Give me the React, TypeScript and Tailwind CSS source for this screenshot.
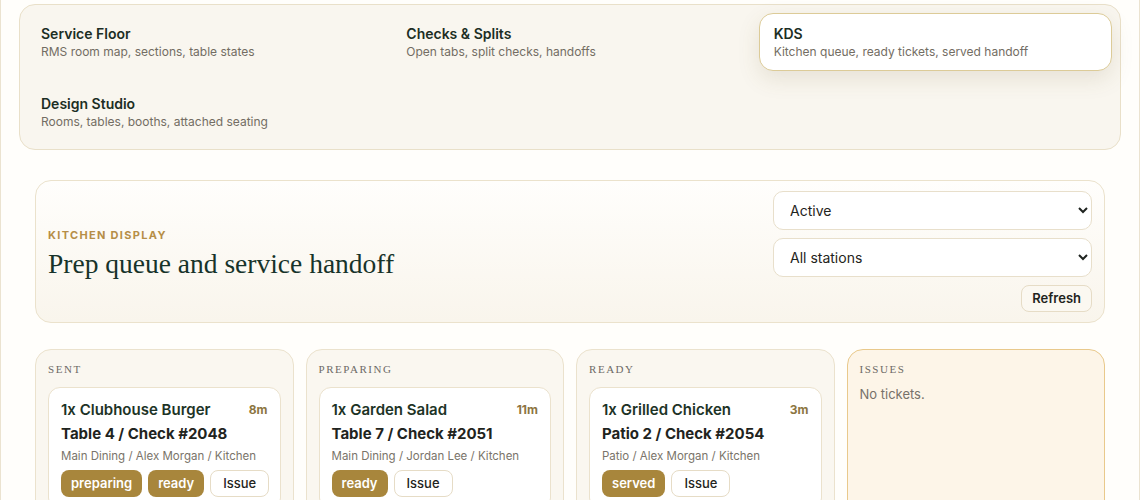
import { useState } from "react";

type Ticket = {
  item: string;
  age: string;
  where: string;
  meta: string;
  actions: string[];
};

const navItems = [
  { title: "Service Floor", desc: "RMS room map, sections, table states" },
  { title: "Checks & Splits", desc: "Open tabs, split checks, handoffs" },
  { title: "KDS", desc: "Kitchen queue, ready tickets, served handoff" },
  { title: "Design Studio", desc: "Rooms, tables, booths, attached seating" },
];

const lanes: { name: string; issue?: boolean; tickets: Ticket[] }[] = [
  {
    name: "Sent",
    tickets: [
      {
        item: "1x Clubhouse Burger",
        age: "8m",
        where: "Table 4 / Check #2048",
        meta: "Main Dining / Alex Morgan / Kitchen",
        actions: ["preparing", "ready"],
      },
    ],
  },
  {
    name: "Preparing",
    tickets: [
      {
        item: "1x Garden Salad",
        age: "11m",
        where: "Table 7 / Check #2051",
        meta: "Main Dining / Jordan Lee / Kitchen",
        actions: ["ready"],
      },
    ],
  },
  {
    name: "Ready",
    tickets: [
      {
        item: "1x Grilled Chicken",
        age: "3m",
        where: "Patio 2 / Check #2054",
        meta: "Patio / Alex Morgan / Kitchen",
        actions: ["served"],
      },
    ],
  },
  { name: "Issues", issue: true, tickets: [] },
];

function TicketCard({ t }: { t: Ticket }) {
  return (
    <div className="rounded-xl border border-[#ebe2cd] bg-white p-3">
      <div className="flex items-center justify-between">
        <span className="text-[15px] leading-5 font-semibold text-[#1d3326]">{t.item}</span>
        <span className="text-xs font-bold text-[#8c7541]">{t.age}</span>
      </div>
      <div className="mt-1 text-[15px] leading-5 font-bold text-[#1f2420]">{t.where}</div>
      <div className="mt-1 text-[11.5px] leading-4 text-[#7a746a]">{t.meta}</div>
      <div className="mt-1.5 flex gap-1.5">
        {t.actions.map((a) => (
          <button
            key={a}
            className="h-[27px] rounded-lg bg-[#a8863c] px-2.5 text-[13px] font-semibold text-white"
          >
            {a}
          </button>
        ))}
        <button className="h-[27px] rounded-lg border border-[#e6dcc6] bg-white px-3 text-[13px] font-medium text-[#1f2420]">
          Issue
        </button>
      </div>
    </div>
  );
}

export default function App() {
  const [status, setStatus] = useState("active");
  const [station, setStation] = useState("all");

  return (
    <div className="min-h-screen border-x border-[#ebe3d0] bg-[#fffefb] px-[18px] pt-1 font-['Inter',sans-serif]">
      {/* Module switcher */}
      <nav className="grid grid-cols-3 gap-3 rounded-2xl border border-[#e9e0c9] bg-[#f9f6ef] p-2">
        {navItems.map((n) => {
          const active = n.title === "KDS";
          return (
            <div
              key={n.title}
              className={
                active
                  ? "rounded-[14px] border border-[#dccb98] bg-white px-3.5 py-2.5 shadow-[0_8px_22px_rgba(110,95,50,0.13)]"
                  : "rounded-[14px] border border-transparent px-3 py-2.5"
              }
            >
              <div className="text-sm leading-5 font-semibold text-[#1c2e24]">{n.title}</div>
              <div className="text-xs leading-4 text-[#736d63]">{n.desc}</div>
            </div>
          );
        })}
      </nav>

      <main className="px-4">
        {/* Header */}
        <section className="mt-[30px] flex items-center justify-between rounded-2xl border border-[#ebe2cc] bg-gradient-to-b from-[#fffefc] to-[#f9f5ec] px-3 py-2.5">
          <div className="pt-1">
            <div className="text-[11px] font-bold tracking-[0.12em] text-[#b68e47] uppercase">
              Kitchen Display
            </div>
            <h1 className="mt-1 font-['Liberation_Serif',serif] text-[27.5px] leading-8 text-[#17332a]">
              Prep queue and service handoff
            </h1>
          </div>
          <div className="flex w-[319px] flex-col items-end gap-2">
            <select
              value={status}
              onChange={(e) => setStatus(e.target.value)}
              className="h-[39px] w-full rounded-[10px] border border-[#e8dfcb] bg-white pr-2 pl-3 text-sm text-[#1f2420]"
            >
              <option value="active">Active</option>
              <option value="all">All</option>
            </select>
            <select
              value={station}
              onChange={(e) => setStation(e.target.value)}
              className="h-[39px] w-full rounded-[10px] border border-[#e8dfcb] bg-white pr-2 pl-3 text-sm text-[#1f2420]"
            >
              <option value="all">All stations</option>
              <option value="kitchen">Kitchen</option>
            </select>
            <button className="h-[27px] rounded-lg border border-[#e6dcc6] bg-[#fbf8f1] px-2.5 text-[13px] font-semibold text-[#1f2420]">
              Refresh
            </button>
          </div>
        </section>

        {/* Lanes */}
        <section className="mt-[26px] grid grid-cols-4 gap-3">
          {lanes.map((l) => (
            <div
              key={l.name}
              className={
                l.issue
                  ? "flex min-h-[180px] flex-col gap-2.5 rounded-2xl border border-[#e9c98b] bg-[#fdf5e8] p-3"
                  : "flex min-h-[180px] flex-col gap-2.5 rounded-2xl border border-[#ebe2cd] bg-[#faf7f0] p-3"
              }
            >
              <div className="font-['Liberation_Serif',serif] text-[11px] leading-[15px] tracking-[0.14em] text-[#6d6a66] uppercase">
                {l.name}
              </div>
              {l.tickets.length === 0 ? (
                <div className="-mt-0.5 text-[13px] leading-[18px] text-[#77716a]">No tickets.</div>
              ) : (
                l.tickets.map((t) => <TicketCard key={t.where} t={t} />)
              )}
            </div>
          ))}
        </section>
      </main>
    </div>
  );
}
